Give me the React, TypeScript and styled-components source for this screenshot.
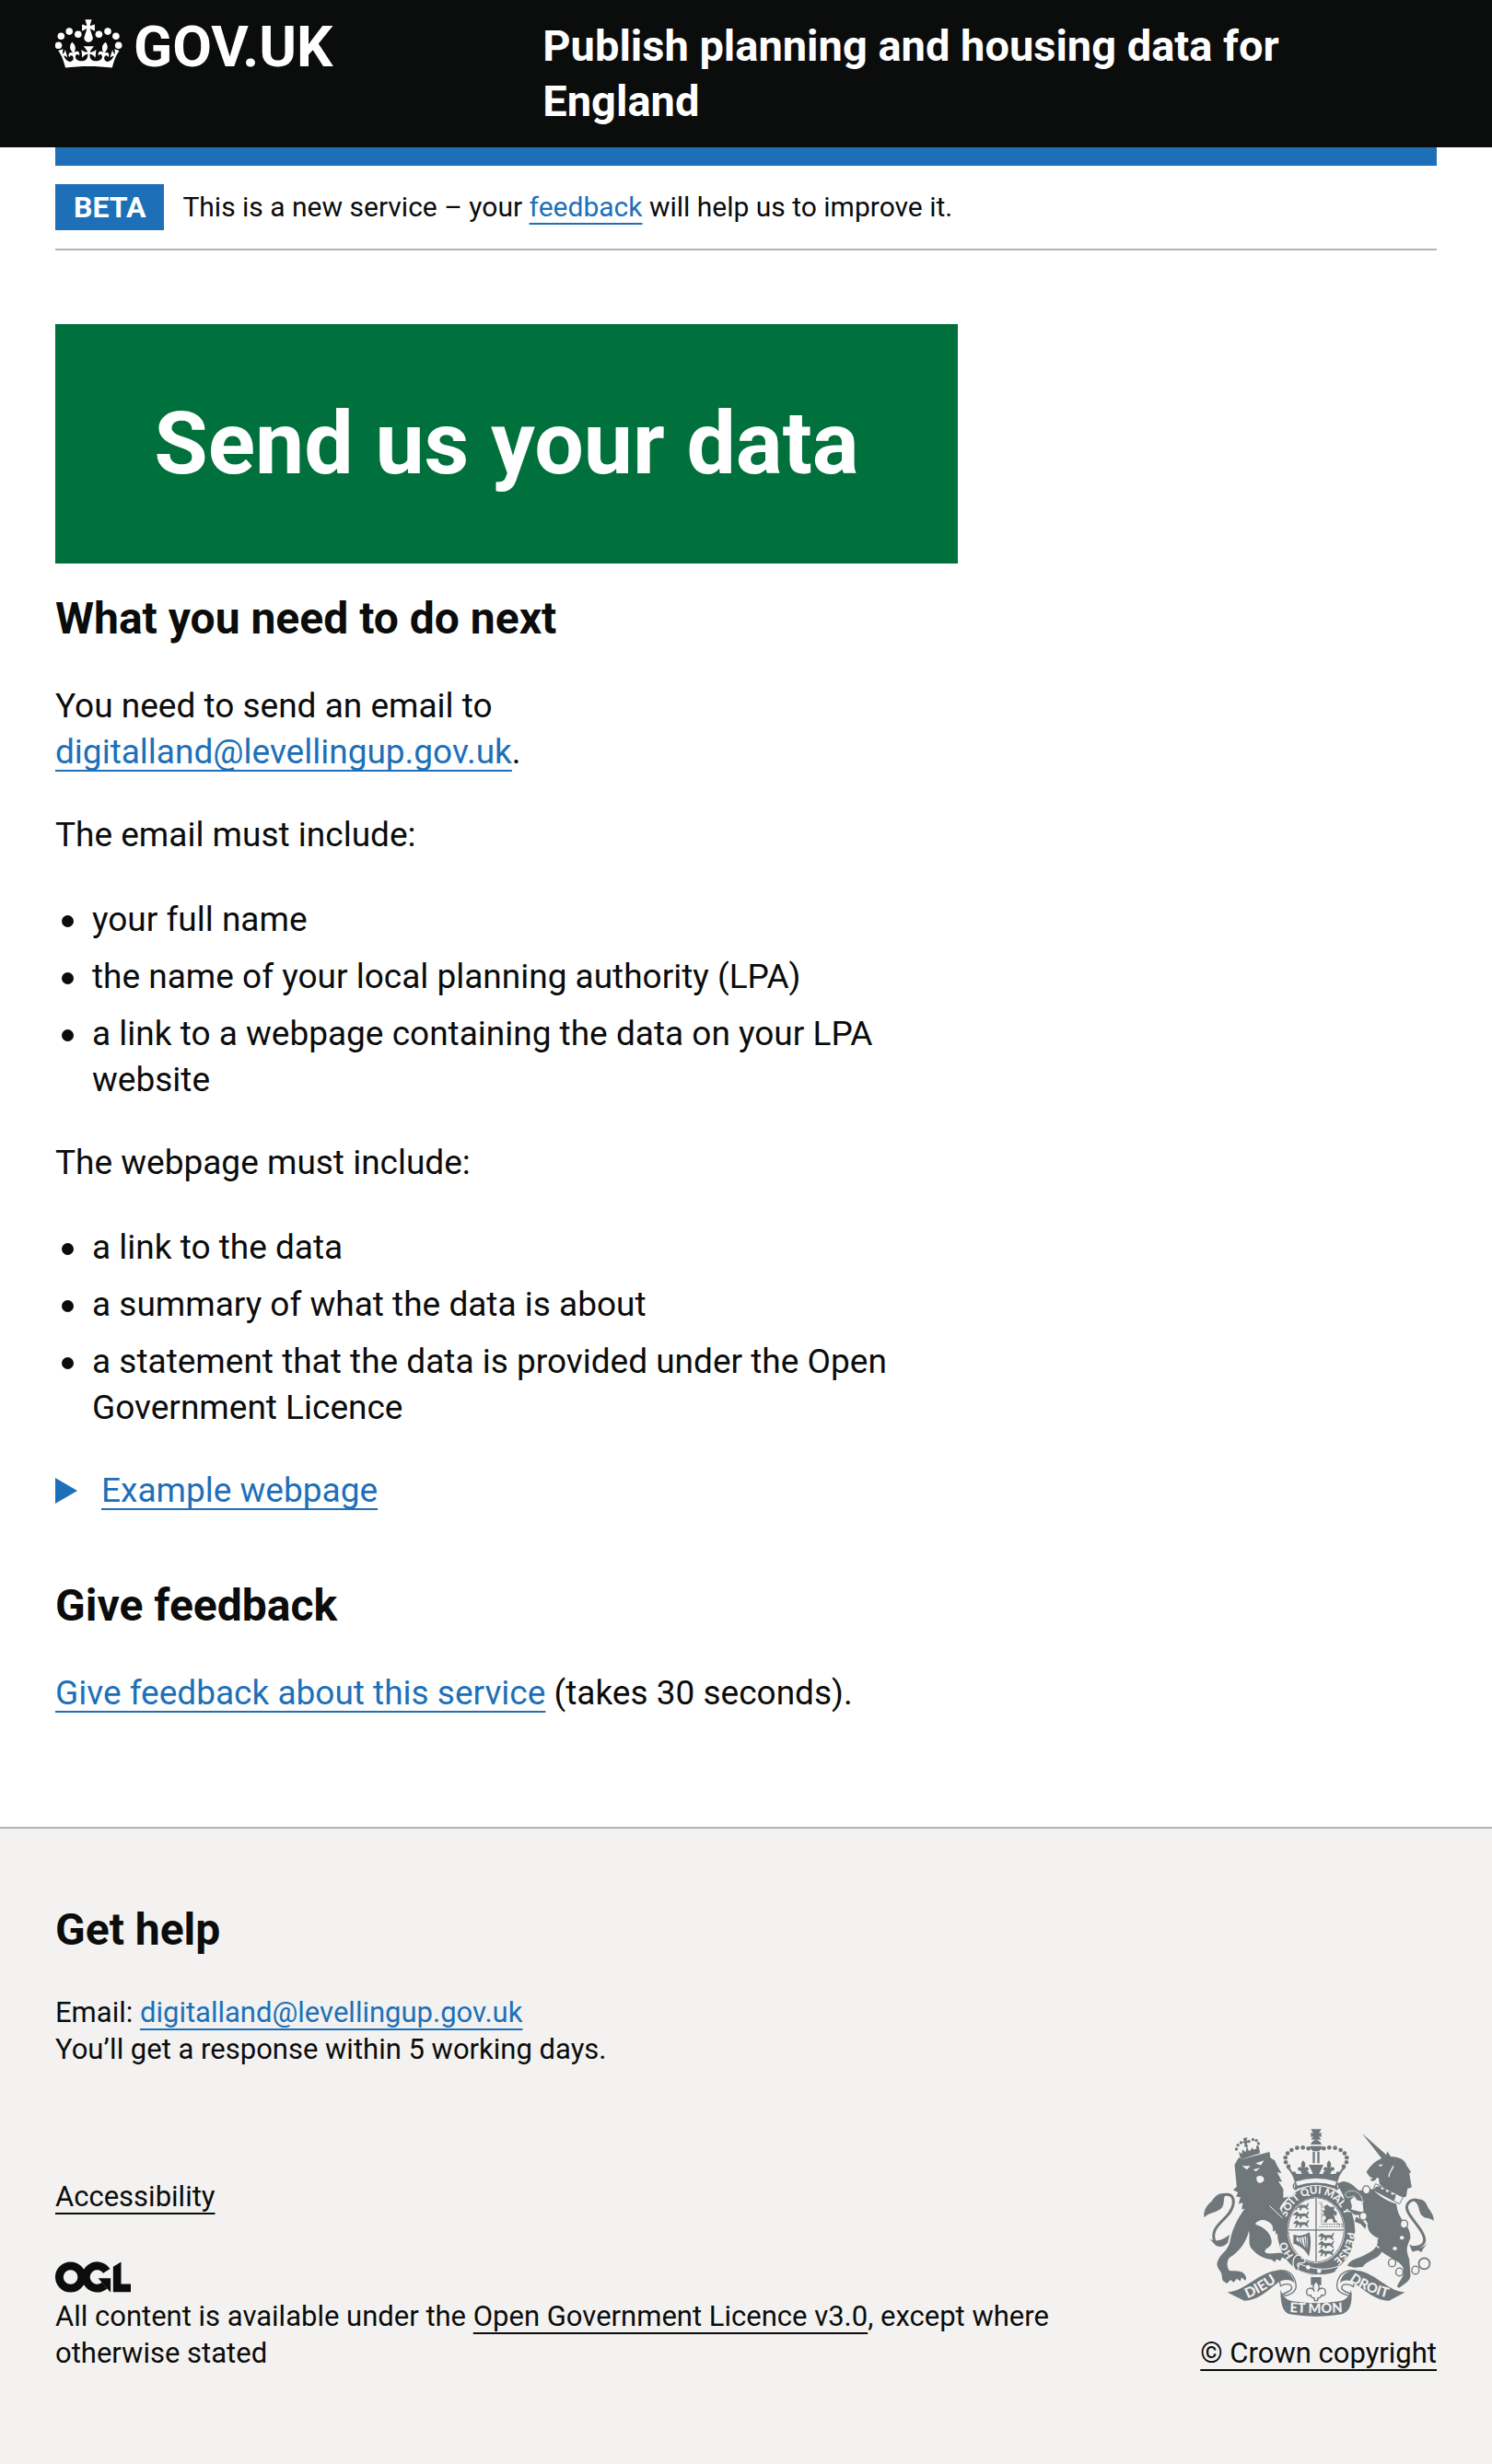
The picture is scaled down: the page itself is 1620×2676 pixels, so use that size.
import React from "react";
import styled, { createGlobalStyle } from "styled-components";

const colour = {
  ink: "#0b0c0c",
  link: "#1d70b8",
  green: "#00703c",
  border: "#b1b4b6",
  footer: "#f3f2f1",
  crest: "#6f777b",
};

const GlobalStyle = createGlobalStyle`
  *, *::before, *::after { box-sizing: border-box; }
  body {
    margin: 0;
    background: ${colour.footer};
    color: ${colour.ink};
    font-family: Roboto, "Noto Sans", sans-serif;
  }
`;

const Page = styled.div`
  background: #ffffff;
`;

const Container = styled.div`
  max-width: 2040px;
  margin: 0 auto;
  padding: 0 60px;
`;

/* Header */

const HeaderBar = styled.header`
  background: ${colour.ink};
  color: #ffffff;
`;

const HeaderGrid = styled.div`
  display: grid;
  grid-template-columns: 1fr 2fr;
  column-gap: 44px;
  align-items: start;
  padding: 20px 0;
`;

const LogoLink = styled.a`
  display: flex;
  align-items: flex-start;
  gap: 10px;
  color: #ffffff;
  text-decoration: none;
  font-size: 62px;
  line-height: 62px;
  font-weight: 700;
`;

const ServiceName = styled.a`
  padding-right: 60px;
  color: #ffffff;
  text-decoration: none;
  font-size: 47px;
  line-height: 60px;
  font-weight: 700;
`;

const BlueBar = styled.div`
  height: 20px;
  background: ${colour.link};
`;

const PhaseBanner = styled.div`
  display: flex;
  align-items: center;
  gap: 20px;
  padding: 20px 0;
  border-bottom: 2px solid ${colour.border};
  font-size: 30px;
  line-height: 40px;
`;

const PhaseTag = styled.strong`
  padding: 5px 20px;
  background: ${colour.link};
  color: #ffffff;
  font-size: 32px;
  line-height: 40px;
`;

const Link = styled.a<{ $plain?: boolean }>`
  color: ${(p) => (p.$plain ? colour.ink : colour.link)};
  text-decoration: underline;
  text-decoration-thickness: 2px;
  text-underline-offset: 7px;
  text-decoration-skip-ink: none;
`;

/* Main */

const Main = styled.main`
  padding: 80px 0;
`;

const Column = styled.div`
  width: calc((100% + 60px) * 2 / 3 - 60px);
`;

const Panel = styled.div`
  margin-bottom: 30px;
  padding: 80px;
  background: ${colour.green};
  color: #ffffff;
  text-align: center;
`;

const PanelTitle = styled.h1`
  margin: 0;
  font-size: 95px;
  line-height: 100px;
  font-weight: 700;
`;

const Heading = styled.h2`
  margin: 0 0 40px;
  font-size: 48px;
  line-height: 60px;
  font-weight: 700;
`;

const Body = styled.p`
  margin: 0 0 40px;
  font-size: 37px;
  line-height: 50px;
`;

const List = styled.ul`
  display: flex;
  flex-direction: column;
  gap: 10px;
  margin: 0 0 40px;
  padding: 0;
  list-style: none;
  font-size: 37px;
  line-height: 50px;
`;

const Item = styled.li`
  display: flex;
  gap: 20px;
  padding: 2px 0 0 7px;

  &::before {
    content: "";
    flex: none;
    width: 13px;
    height: 13px;
    margin-top: 20px;
    border-radius: 50%;
    background: ${colour.ink};
  }
`;

const Details = styled.details`
  margin-bottom: 70px;
  font-size: 37px;
  line-height: 50px;
`;

const Summary = styled.summary`
  display: flex;
  align-items: center;
  gap: 26px;
  width: fit-content;
  list-style: none;
  color: ${colour.link};
  cursor: pointer;

  &::-webkit-details-marker {
    display: none;
  }

  &::before {
    content: "";
    border-style: solid;
    border-width: 14px 0 14px 24px;
    border-color: transparent transparent transparent currentColor;
  }
`;

const SummaryText = styled.span`
  text-decoration: underline;
  text-decoration-thickness: 2px;
  text-underline-offset: 7px;
  text-decoration-skip-ink: none;
`;

/* Footer */

const FooterBar = styled.footer`
  padding: 80px 0 100px;
  border-top: 2px solid ${colour.border};
  background: ${colour.footer};
  font-size: 31px;
  line-height: 40px;
`;

const Help = styled.p`
  margin: 0 0 66px;
`;

const FooterMeta = styled.div`
  display: flex;
  align-items: flex-end;
  justify-content: space-between;
  gap: 60px;
`;

const FooterText = styled.div`
  flex: 1;
  max-width: 1120px;
`;

const FooterLinks = styled.div`
  margin-bottom: 50px;
`;

const OglLogo = styled.svg`
  display: block;
  width: 82px;
  height: 34px;
  margin-bottom: 6px;
`;

const Copyright = styled.a`
  display: flex;
  flex-direction: column;
  align-items: center;
  gap: 20px;
  color: ${colour.ink};
  text-decoration: underline;
  text-decoration-thickness: 2px;
  text-underline-offset: 7px;
  text-decoration-skip-ink: none;
`;

const Crown = () => (
  <svg width="75" height="54" viewBox="60 20 75 54" fill="#fff" aria-hidden="true">
    {[
      [63.5, 49.3],
      [66.3, 39.2],
      [75.2, 34.1],
      [84.8, 37.2],
      [107.4, 37.2],
      [117, 34.1],
      [125.9, 39.2],
      [128.7, 49.3],
    ].map(([cx, cy]) => (
      <circle key={cx} cx={cx} cy={cy} r="3.8" />
    ))}
    <path
      transform="translate(62.4 21.3) scale(2.1)"
      d="M17 4.7l2.3 1.2V2.5l-2.3.7-.2-.2.9-3h-3.4l.9 3-.2.2-2.3-.7v3.4L15 4.7c.1.1.1.2.2.2l-1.3 4c-.1.2-.1.4-.1.6 0 1.1.8 2 1.9 2.2h.7c1-.2 1.9-1.1 1.9-2.1 0-.2 0-.4-.1-.6l-1.3-4c-.1-.2 0-.2.1-.3"
    />
    <path
      transform="translate(62.4 10.6) scale(2.1)"
      d="M16 29.2c4.4 0 8.6.3 12.3.8 1.1-4.5 2.4-7 3.7-8.8l-2.5-.9c.2 1.3.3 1.9 0 2.7-.4-.4-.8-1.1-1.1-2.3l-1.2 4c.7-.5 1.3-.8 2-.9-1.1 2.5-2.6 3.1-3.5 3-1.1-.2-1.7-1.2-1.5-2.1.3-1.2 1.5-1.5 2.1-.1 1.1-2.3-.8-3-2-2.3 1.9-1.9 2.1-3.5.6-5.6-2.1 1.6-2.1 3.2-1.2 5.5-1.2-1.4-3.2-.6-2.5 1.6.9-1.4 2.1-.5 1.9.8-.2 1.1-1.7 2.1-3.5 1.9-2.7-.2-2.9-2.1-2.9-3.6.7-.1 1.9.5 2.9 1.9l.4-4.3c-1.1 1.1-2.1 1.4-3.2 1.4.4-1.2 2.1-3 2.1-3h-5.4s1.7 1.9 2.1 3c-1.1 0-2.1-.2-3.2-1.4l.4 4.3c1-1.4 2.2-2 2.9-1.9-.1 1.5-.2 3.4-2.9 3.6-1.9.2-3.4-.8-3.5-1.9-.2-1.3 1-2.2 1.9-.8.7-2.3-1.2-3-2.5-1.6.9-2.2.9-3.9-1.2-5.5-1.5 2-1.3 3.7.6 5.6-1.2-.7-3.1 0-2 2.3.6-1.4 1.8-1.1 2.1.1.2.9-.3 1.9-1.5 2.1-.9.2-2.4-.5-3.5-3 .6 0 1.2.3 2 .9l-1.2-4c-.3 1.1-.7 1.9-1.1 2.3-.3-.8-.2-1.4 0-2.7l-2.5.9c1.3 1.8 2.6 4.3 3.7 8.8 3.7-.5 7.9-.8 12.3-.8"
    />
  </svg>
);

const lightText = {
  fill: colour.footer,
  fontFamily: "Lato, Roboto, sans-serif",
  fontWeight: 900,
};

const crownPearls = (side: 1 | -1) =>
  [
    [8, 128],
    [25, 129],
    [43, 126],
    [62, 127],
    [80, 134],
    [93, 145],
    [100, 159],
    [99, 174],
    [90, 188],
  ].map(([dx, y]) => <circle key={dx} cx={438 + side * dx} cy={y} r="7" />);

const Fleur = ({ x, y }: { x: number; y: number }) => (
  <path
    transform={`translate(${x} ${y})`}
    d="M0-22c8 8 9 16 3 26 4-6 14-6 15 2 0 6-6 8-9 4-1 6-3 8-5 12h-8c-2-4-4-6-5-12-3 4-9 2-9-4 1-8 11-8 15-2-6-10-5-18 3-26z"
  />
);

const WalkingLion = ({ y }: { y: number }) => (
  <path
    transform={`translate(0 ${y})`}
    d="M2 6l7-5 5 3 3 4 16-1 8 2 2-6 6-3-1 4-3 7-2 5 6 6-6 1-8-7-9 1-3 8h-5l1-8-7-1-2 7-7 3 2-6 3-5-6-3-5 3 1-5z"
  />
);

const RoyalArms = () => (
  <svg width="250" height="204" viewBox="72 65 750 613" fill={colour.crest} aria-hidden="true">
    <defs>
      <path id="garter" d="M438 513A103 118 0 0 1 438 277A103 118 0 0 1 438 513" />
      <path id="dieu" d="M214 618Q262 600 326 552" />
      <path id="droit" d="M546 560Q600 600 680 618" />
      <path id="mon" d="M336 662Q438 670 540 662" />
      <clipPath id="field">
        <ellipse cx="438" cy="395" rx="89" ry="103" />
      </clipPath>
    </defs>

    {/* imperial crown */}
    <path d="M421 66h34l-6 10v5l6-5v17l-6-5v4l5 8h-32l5-8v-4l-6 5V76l6 5v-5z" />
    <path d="M438 99l13 8 5 9-36 0 5-9zM418 121h40c-2 12-8 17-20 17s-18-5-20-17z" />
    <path d="M427 139h7v38h-7zM442 139h7v38h-7z" />
    {crownPearls(1)}
    {crownPearls(-1)}
    <path d="M340 190c14 14 16 20 22 30l8 22-2 22c44-18 96-18 140 0l-2-22 8-22c6-10 8-16 22-30-14 2-18 8-20 16-6-4-12-2-14 6h-18c-4-10-12-14-20-8l-4 8h-12l14-30h-48l14 30h-12l-4-8c-8-6-16-2-20 8h-18c-2-8-8-10-14-6-2-8-6-14-20-16z" />
    <Fleur x={396} y={190} />
    <Fleur x={480} y={190} />
    <path d="M374 244c44-14 84-14 128 0" fill="none" stroke={colour.footer} strokeWidth="14" />
    <path d="M370 240c-10 10-8 22 4 24M506 240c10 10 8 22-4 24" fill="none" stroke={colour.crest} strokeWidth="4" />

    {/* garter and shield */}
    <ellipse cx="438" cy="397" rx="131" ry="149" fill={colour.footer} />
    <ellipse cx="438" cy="397" rx="127" ry="146" />
    <ellipse cx="438" cy="396" rx="94" ry="108" fill={colour.footer} />
    <g clipPath="url(#field)">
      <g transform="translate(366 0)">
        <WalkingLion y={306} />
        <WalkingLion y={334} />
        <WalkingLion y={362} />
      </g>
      <g transform="translate(448 0)">
        <WalkingLion y={404} />
        <WalkingLion y={430} />
        <WalkingLion y={456} />
      </g>
      <path d="M448 304l68 78M448 384h78v-8h-70v-72" fill="none" stroke={colour.crest} strokeWidth="3" strokeDasharray="5 3" />
      <path d="M464 318l10-6 10 8 14 0-2 10 10 8-2 12-8-6 4 18 8 6-12 4-6-14-12 2-8 12-8-4 8-10-2-10-10 2 6-10-6-8 10-2z" />
      <path d="M364 410c16 6 34 4 52-8 6 20 6 50-2 80-10-22-30-36-50-42z" />
      <path d="M374 418c12 3 22 2 34-5 3 16 3 34-1 48-8-16-20-26-33-32z" fill={colour.footer} />
      <path d="M380 416l8 26M388 416l8 34M398 414l6 44M406 410v54" stroke={colour.crest} strokeWidth="3" />
    </g>
    <ellipse cx="438" cy="395" rx="91" ry="105" fill="none" stroke={colour.crest} strokeWidth="3" />
    <path d="M438 290v210M347 395h182" stroke={colour.footer} strokeWidth="10" />
    <path d="M438 290v210M347 395h182" stroke={colour.crest} strokeWidth="4" />
    <text fontSize="34" {...lightText}>
      <textPath href="#garter" startOffset="12%">HO</textPath>
    </text>
    <text fontSize="34" {...lightText}>
      <textPath href="#garter" startOffset="31%">SOIT QUI MAL Y</textPath>
    </text>
    <text fontSize="34" {...lightText}>
      <textPath href="#garter" startOffset="76%">PENSE</textPath>
    </text>
    <path d="M376 478c-16 6-18 40-2 50 10 0 16-8 12-14-8 4-12-4-6-10l18-2c8-6 4-16-6-14 0-8-8-14-16-10z" fill={colour.crest} stroke={colour.footer} strokeWidth="4" />
    <path d="M384 506c50 20 90 22 130 6l-16 22c-40 14-84 8-120-8z" stroke={colour.footer} strokeWidth="3" />
    {[412, 448].map((x, i) => (
      <circle key={x} cx={x} cy={517 + i * 12} r="7" fill={colour.footer} />
    ))}
    <path d="M421 549h34v26h-34z" />
    <path d="M438 562c12 14 12 22 5 34 8-16 26-14 26 2 0 12-10 14-14 8 2 10-6 10-12 12v8h-10v-8c-6-2-14-2-12-12-4 6-14 4-14-8 0-16 18-18 26-2-7-12-7-20 5-34z" fill={colour.footer} stroke={colour.crest} strokeWidth="4" />

    {/* lion */}
    <path d="M190 147l62-20 3 18-62 20z" />
    <path d="M186 140l10 8 2-16 10 10 4-20 8 18 10-14 6 12 14-12-2 14-58 18z" />
    {[
      [178, 131],
      [183, 118],
      [193, 110],
      [219, 106],
      [232, 100],
      [243, 103],
      [250, 113],
      [247, 125],
    ].map(([cx, cy]) => (
      <circle key={cx} cx={cx} cy={cy} r="5" />
    ))}
    <path d="M200 96l14-3-3 9 7 4-6 6 4 12h-12l1-12-8-3 6-5z" />
    <path d="M172 182l14-24 10 6 68-18 22-6 3 20 14 8 4 10 18 32-14-4 16 32-12-2 16 26v28l18-4c-10 12-22 22-30 38 14 26 22 52 28 84l-8-4-2 16-8-12-8 12-4-16-10 6-2-14-8 4c2-18-4-26-16-32-14-10-34-6-42 8 30 10 52 30 54 56 0 22-22 20-22 34 4 8 22 6 44 4 20 0 24 8 24 20l-12-6-6 12-12-6-6 10-10-8c-26-4-46-14-64-34-14-14-6-36-10-60-10 40-32 68-64 88-10 14-8 30 0 42 14 2 38-2 48 10 8 8 8 18 4 22l-12-10-4 12-12-8-10 12-10-8-12 12-14-10-4-24c-10-16-20-24-10-44 12-24 30-28 38-58 6-40 24-74 48-108l-10 2 4-22-14 4 6-22-14-2 6-14-16-8 12-10z" />
    <path d="M196 186l28 0-12 12zM240 178l28-10-10 16zM232 198l24-6-14 12z" fill={colour.footer} />
    <path d="M244 222c8-6 22-4 24 6 2 10-16 20-22 8-2-4-4-10-2-14z" fill={colour.footer} />
    <path d="M286 316l42 40" stroke={colour.footer} strokeWidth="3" />
    <path d="M110 438c-24-46 24-68 46-100 18-28 20-66-20-58" fill="none" stroke={colour.crest} strokeWidth="9" />
    <path d="M144 276c-22-4-34 6-46 24-14 12-30 32-25 54 18-18 42-14 58-32 10-14 2-30 13-46zM90 424c16 10 40 8 66-14l-6 26c-16 20-40 14-44 4z" />

    {/* unicorn */}
    <path d="M588 80l82 72-16 12z" />
    <path d="M602 206c14-22 32-40 64-50l4-18 12 18c28 0 46 10 52 30l14 20-6 4 8 46-14 4-4 26c-14 8-50-8-86-40-6-12 2-20-10-22-4 12-16 14-22 8l10-8c-8 2-14-6-22-18z" />
    <path d="M640 184l16-4-6 8z" fill={colour.footer} />
    <path d="M690 186c-4 16-16 20-14 36" fill="none" stroke={colour.footer} strokeWidth="4" />
    <path d="M632 244l90 44-12 22-86-46z" fill={colour.footer} stroke={colour.crest} strokeWidth="3" />
    <path d="M634 254l14-2 4 12 12-6 4 14 14-6 2 14 14-2-2 14-4 8-68-36z" />
    <path d="M622 262c26 28 54 40 78 48 6 60 44 62 46 110-10 28-18 36-4 70l4 56c-4 20-24 26-36 38l-8-4c8-24 26-28 20-62-10-22-42-30-70-52-10 26-50 26-62 50l-28 2-22-6c10-24 40-24 58-36 30-14 48-32 38-56-20-10-32-24-30-48-16-16-12-54-20-88-20 0-30 4-36 14 2 14 8 16 2 30l38 10-2 8-24 0-36-30c8-26-6-40-8-46l-14-26 20-8c28 2 40 22 52 30z" />
    <path d="M532 278c14-18 40-12 52 6l8 20-22-6-8-14-22 6z" stroke={colour.footer} strokeWidth="2" />
    <path d="M568 352l22 12 12 14-4 14-14-16-20-8z" />
    <path d="M640 420c-10 14-10 28 4 34" fill="none" stroke={colour.footer} strokeWidth="4" />
    <path d="M750 452c44 0 50-22 32-52-18-32-62-68-44-92 10-14 26-14 34-6" fill="none" stroke={colour.crest} strokeWidth="9" />
    <path d="M752 298c24-10 44-2 50 22 8 14 22 26 19 46-10-14-26-4-40-20-10-14-4-38-29-48zM800 440c-12 14-34 16-46 8l-12-6 10 24 18-4 12 6 6-12z" />
    {[
      [602, 264],
      [592, 350],
      [725, 376],
      [718, 420],
      [695, 456],
      [686, 502],
      [710, 532],
      [762, 526],
    ].map(([cx, cy], i) => (
      <ellipse
        key={cx}
        cx={cx}
        cy={cy}
        rx={i === 3 || i === 4 ? 9 : 12}
        ry={i === 3 || i === 4 ? 8 : 13}
        fill={colour.footer}
        stroke={colour.crest}
        strokeWidth="4"
      />
    ))}
    <circle cx="791" cy="505" r="18" fill="none" stroke={colour.crest} strokeWidth="5" />

    {/* motto ribbon */}
    <path d="M312 528c26-4 54 4 60 44 4 22-10 32-34 38l-8-6c20-8 32-14 28-24-4-12-24-10-36-2z" fill={colour.footer} stroke={colour.crest} strokeWidth="4" />
    <path d="M568 528c-26-4-56 4-62 44-2 22 12 30 40 38l6-6c-20-8-34-14-30-24 4-12 26-8 38 0z" fill={colour.footer} stroke={colour.crest} strokeWidth="4" />
    <path d="M148 598c54 0 110-70 164-70 30-4 50 14 56 40-14-16-44-12-56 0-36 28-68 58-108 58z" />
    <path d="M728 598c-54 0-104-70-158-70-28-4-50 14-54 40 14-16 40-8 52 4 36 26 68 54 108 54z" />
    <path d="M322 590c8 22 18 34 42 38 50 8 100 8 148 0 24-4 34-16 40-38 6 40-2 72-30 80-54 10-112 10-170 0-28-8-30-50-30-80z" />
    <text fontSize="46" {...lightText}>
      <textPath href="#dieu">DIEU</textPath>
    </text>
    <text fontSize="44" {...lightText}>
      <textPath href="#droit">DROIT</textPath>
    </text>
    <text fontSize="44" {...lightText} textAnchor="middle">
      <textPath href="#mon" startOffset="50%">ET MON</textPath>
    </text>
  </svg>
);

const Ogl = () => (
  <OglLogo viewBox="0 0 484 196" role="img" aria-label="Open Government Licence">
    <circle cx="98" cy="98" r="72" fill="none" stroke={colour.ink} strokeWidth="52" />
    <path d="M329 59A72 72 0 1 0 316 152" fill="none" stroke={colour.ink} strokeWidth="52" />
    <path d="M275 106h80v88h-3z" fill={colour.ink} />
    <path d="M371 32L422 0v143h62v51H371z" fill={colour.ink} />
  </OglLogo>
);

const emailItems = [
  "your full name",
  "the name of your local planning authority (LPA)",
  "a link to a webpage containing the data on your LPA website",
];

const webpageItems = [
  "a link to the data",
  "a summary of what the data is about",
  "a statement that the data is provided under the Open Government Licence",
];

const BulletList = ({ items }: { items: string[] }) => (
  <List>
    {items.map((item) => (
      <Item key={item}>
        <span>{item}</span>
      </Item>
    ))}
  </List>
);

export default function App() {
  return (
    <Page>
      <GlobalStyle />
      <HeaderBar>
        <Container>
          <HeaderGrid>
            <LogoLink href="#home">
              <Crown />
              GOV.UK
            </LogoLink>
            <ServiceName href="#service">Publish planning and housing data for England</ServiceName>
          </HeaderGrid>
        </Container>
      </HeaderBar>
      <Container>
        <BlueBar />
        <PhaseBanner>
          <PhaseTag>BETA</PhaseTag>
          <span>
            This is a new service – your <Link href="#feedback">feedback</Link> will help us to improve it.
          </span>
        </PhaseBanner>
        <Main>
          <Column>
            <Panel>
              <PanelTitle>Send us your data</PanelTitle>
            </Panel>
            <Heading>What you need to do next</Heading>
            <Body>
              You need to send an email to
              <br />
              <Link href="mailto:digitalland@levellingup.gov.uk">digitalland@levellingup.gov.uk</Link>.
            </Body>
            <Body>The email must include:</Body>
            <BulletList items={emailItems} />
            <Body>The webpage must include:</Body>
            <BulletList items={webpageItems} />
            <Details>
              <Summary>
                <SummaryText>Example webpage</SummaryText>
              </Summary>
            </Details>
            <Heading>Give feedback</Heading>
            <Body>
              <Link href="#feedback">Give feedback about this service</Link> (takes 30 seconds).
            </Body>
          </Column>
        </Main>
      </Container>
      <FooterBar>
        <Container>
          <Heading>Get help</Heading>
          <Help>
            Email: <Link href="mailto:digitalland@levellingup.gov.uk">digitalland@levellingup.gov.uk</Link>
            <br />
            You’ll get a response within 5 working days.
          </Help>
          <FooterMeta>
            <FooterText>
              <FooterLinks>
                <Link $plain href="#accessibility">Accessibility</Link>
              </FooterLinks>
              <Ogl />
              <div>
                All content is available under the{" "}
                <Link $plain href="#licence">Open Government Licence v3.0</Link>, except where otherwise stated
              </div>
            </FooterText>
            <Copyright href="#copyright">
              <RoyalArms />
              © Crown copyright
            </Copyright>
          </FooterMeta>
        </Container>
      </FooterBar>
    </Page>
  );
}
